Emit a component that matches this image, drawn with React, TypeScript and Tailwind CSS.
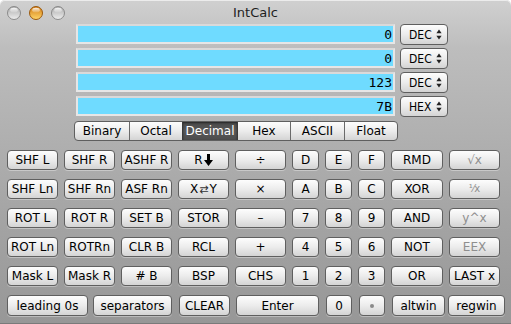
import React from "react";

const FONT = "font-['DejaVu_Sans',sans-serif]";

const btn =
  "flex items-center justify-center h-[20px] rounded-[4px] border border-[#5f5f5f] bg-[linear-gradient(#fdfdfd,#ececec_50%,#d4d4d4)] shadow-[0_1px_0_rgba(255,255,255,0.35)] text-[12px] leading-none whitespace-nowrap";

function Btn({
  children,
  disabled,
  className = "",
}: {
  children: React.ReactNode;
  disabled?: boolean;
  className?: string;
}) {
  return (
    <div
      className={`${btn} ${disabled ? "text-[#8e8e8e]" : "text-black"} ${className}`}
    >
      {children}
    </div>
  );
}

function Light({ active }: { active?: boolean }) {
  const id = active ? "lo" : "lg";
  return (
    <svg width="14" height="14" viewBox="0 0 14 14">
      <defs>
        <linearGradient id={id + "f"} x1="0" y1="0" x2="0" y2="1">
          {active ? (
            <>
              <stop offset="0" stopColor="#d27a12" />
              <stop offset="1" stopColor="#ffd66a" />
            </>
          ) : (
            <>
              <stop offset="0" stopColor="#a9a9a9" />
              <stop offset="1" stopColor="#efefef" />
            </>
          )}
        </linearGradient>
        <linearGradient id={id + "h"} x1="0" y1="0" x2="0" y2="1">
          <stop offset="0" stopColor="#ffffff" stopOpacity="0.9" />
          <stop offset="1" stopColor="#ffffff" stopOpacity="0.1" />
        </linearGradient>
      </defs>
      <circle
        cx="7"
        cy="7"
        r="6.5"
        fill={`url(#${id}f)`}
        stroke={active ? "#9a5a10" : "#8a8a8a"}
        strokeWidth="1"
      />
      <ellipse cx="7" cy="4.2" rx="3.8" ry="2.4" fill={`url(#${id}h)`} />
    </svg>
  );
}

function Arrows() {
  return (
    <svg width="6" height="11" viewBox="0 0 6 11">
      <path d="M3 0.5 L5.6 4.2 L0.4 4.2 Z" fill="#222" />
      <path d="M3 10.5 L5.6 6.8 L0.4 6.8 Z" fill="#222" />
    </svg>
  );
}

function DownArrow() {
  return (
    <svg width="9" height="12" viewBox="0 0 9 12" className="ml-[1px]">
      <path d="M3 0 H6 V6 H9 L4.5 12 L0 6 H3 Z" fill="#000" />
    </svg>
  );
}

function DisplayRow({ value, base }: { value: string; base: string }) {
  return (
    <div className="flex items-start h-[21px]">
      <div className="w-[319px] h-[20px] border-2 border-[#e6e6e6] border-t-[#d9d9d9] bg-[#6fdbff] flex items-center justify-end pr-[1px] font-['DejaVu_Sans_Mono',monospace] text-[13px] leading-none text-black">
        {value}
      </div>
      <div className="ml-[5px] w-[48px] h-[21px] rounded-[4px] border border-[#5f5f5f] bg-[linear-gradient(#fdfdfd,#ececec_50%,#d4d4d4)] flex items-center pl-[8px] pr-[5px] justify-between text-[12px] leading-none text-black font-['DejaVu_Sans_Condensed','DejaVu_Sans',sans-serif]">
        <span>{base}</span>
        <Arrows />
      </div>
    </div>
  );
}

const seg =
  "flex items-center justify-center h-full text-[12px] leading-none";

export default function App() {
  return (
    <div className={`w-[511px] h-[324px] bg-white ${FONT}`}>
      <div className="w-[511px] h-[324px] rounded-t-[5px] bg-[linear-gradient(#d0d0d0,#bdbdbd_15%,#a3a3a3_70%,#979797)] border-b border-[#7a7a7a] shadow-[inset_0_1px_0_#ececec] flex flex-col">
        {/* title bar */}
        <div className="h-[22px] grid grid-cols-[1fr_auto_1fr]">
          <div className="flex items-start pt-[6px] pl-[7px] gap-[8px]">
            <Light />
            <Light active />
            <Light />
          </div>
          <div className="pt-[5px] text-[13px] leading-[15px] text-[#1e1e1e]">
            IntCalc
          </div>
          <div />
        </div>

        {/* displays */}
        <div className="pt-[2px] pl-[76px] flex flex-col gap-[3px]">
          <DisplayRow value="0" base="DEC" />
          <DisplayRow value="0" base="DEC" />
          <DisplayRow value="123" base="DEC" />
          <DisplayRow value="7B" base="HEX" />
        </div>

        {/* segmented */}
        <div className="mt-[4px] ml-[74px] w-[324px] h-[20px] flex rounded-[4px] border border-[#5f5f5f] overflow-hidden bg-[linear-gradient(#fdfdfd,#ececec_50%,#d4d4d4)] text-black">
          <div className={`${seg} w-[54px]`}>Binary</div>
          <div className={`${seg} w-[53px] border-l border-[#6a6a6a]`}>Octal</div>
          <div className={`${seg} w-[55px] border-l border-[#3a3a3a] bg-[linear-gradient(#4a4a4a,#595959_50%,#4c4c4c)] text-white shadow-[inset_0_1px_2px_rgba(0,0,0,0.5)]`}>
            Decimal
          </div>
          <div className={`${seg} w-[53px] border-l border-[#3a3a3a]`}>Hex</div>
          <div className={`${seg} w-[54px] border-l border-[#6a6a6a]`}>ASCII</div>
          <div className={`${seg} w-[53px] border-l border-[#6a6a6a]`}>Float</div>
        </div>

        {/* keypad */}
        <div className="mt-[9px] ml-[7px] grid grid-cols-[51px_51px_51px_51px_51px_27px_27px_27px_52px_51px] gap-x-[6px] gap-y-[9px] auto-rows-[20px]">
          <Btn>SHF L</Btn>
          <Btn>SHF R</Btn>
          <Btn>ASHF R</Btn>
          <Btn>
            R<DownArrow />
          </Btn>
          <Btn>÷</Btn>
          <Btn>D</Btn>
          <Btn>E</Btn>
          <Btn>F</Btn>
          <Btn>RMD</Btn>
          <Btn disabled>√x</Btn>

          <Btn>SHF Ln</Btn>
          <Btn>SHF Rn</Btn>
          <Btn>ASF Rn</Btn>
          <Btn>
            X<span className="text-[11px] text-[#333] mx-[1px]">⇄</span>Y
          </Btn>
          <Btn>×</Btn>
          <Btn>A</Btn>
          <Btn>B</Btn>
          <Btn>C</Btn>
          <Btn>XOR</Btn>
          <Btn disabled>
            <span className="text-[10px]">¹⁄x</span>
          </Btn>

          <Btn>ROT L</Btn>
          <Btn>ROT R</Btn>
          <Btn>SET B</Btn>
          <Btn>STOR</Btn>
          <Btn>–</Btn>
          <Btn>7</Btn>
          <Btn>8</Btn>
          <Btn>9</Btn>
          <Btn>AND</Btn>
          <Btn disabled>y^x</Btn>

          <Btn>ROT Ln</Btn>
          <Btn>ROTRn</Btn>
          <Btn>CLR B</Btn>
          <Btn>RCL</Btn>
          <Btn>+</Btn>
          <Btn>4</Btn>
          <Btn>5</Btn>
          <Btn>6</Btn>
          <Btn>NOT</Btn>
          <Btn disabled>EEX</Btn>

          <Btn>Mask L</Btn>
          <Btn>Mask R</Btn>
          <Btn># B</Btn>
          <Btn>BSP</Btn>
          <Btn>CHS</Btn>
          <Btn>1</Btn>
          <Btn>2</Btn>
          <Btn>3</Btn>
          <Btn>OR</Btn>
          <Btn>LAST x</Btn>
        </div>

        {/* bottom row */}
        <div className="mt-[9px] flex">
          <Btn className="ml-[7px] w-[81px] h-[21px]">leading 0s</Btn>
          <Btn className="ml-[5px] w-[79px] h-[21px]">separators</Btn>
          <Btn className="ml-[7px] w-[51px] h-[21px]">CLEAR</Btn>
          <Btn className="ml-[6px] w-[83px] h-[21px]">Enter</Btn>
          <Btn className="ml-[7px] w-[26px] h-[21px]">0</Btn>
          <Btn className="ml-[7px] w-[26px] h-[21px]">
            <span className="w-[4px] h-[4px] rounded-full bg-[#8a8a8a]" />
          </Btn>
          <Btn className="ml-[7px] w-[53px] h-[21px]">altwin</Btn>
          <Btn className="ml-[3px] w-[57px] h-[21px]">regwin</Btn>
        </div>
      </div>
    </div>
  );
}
